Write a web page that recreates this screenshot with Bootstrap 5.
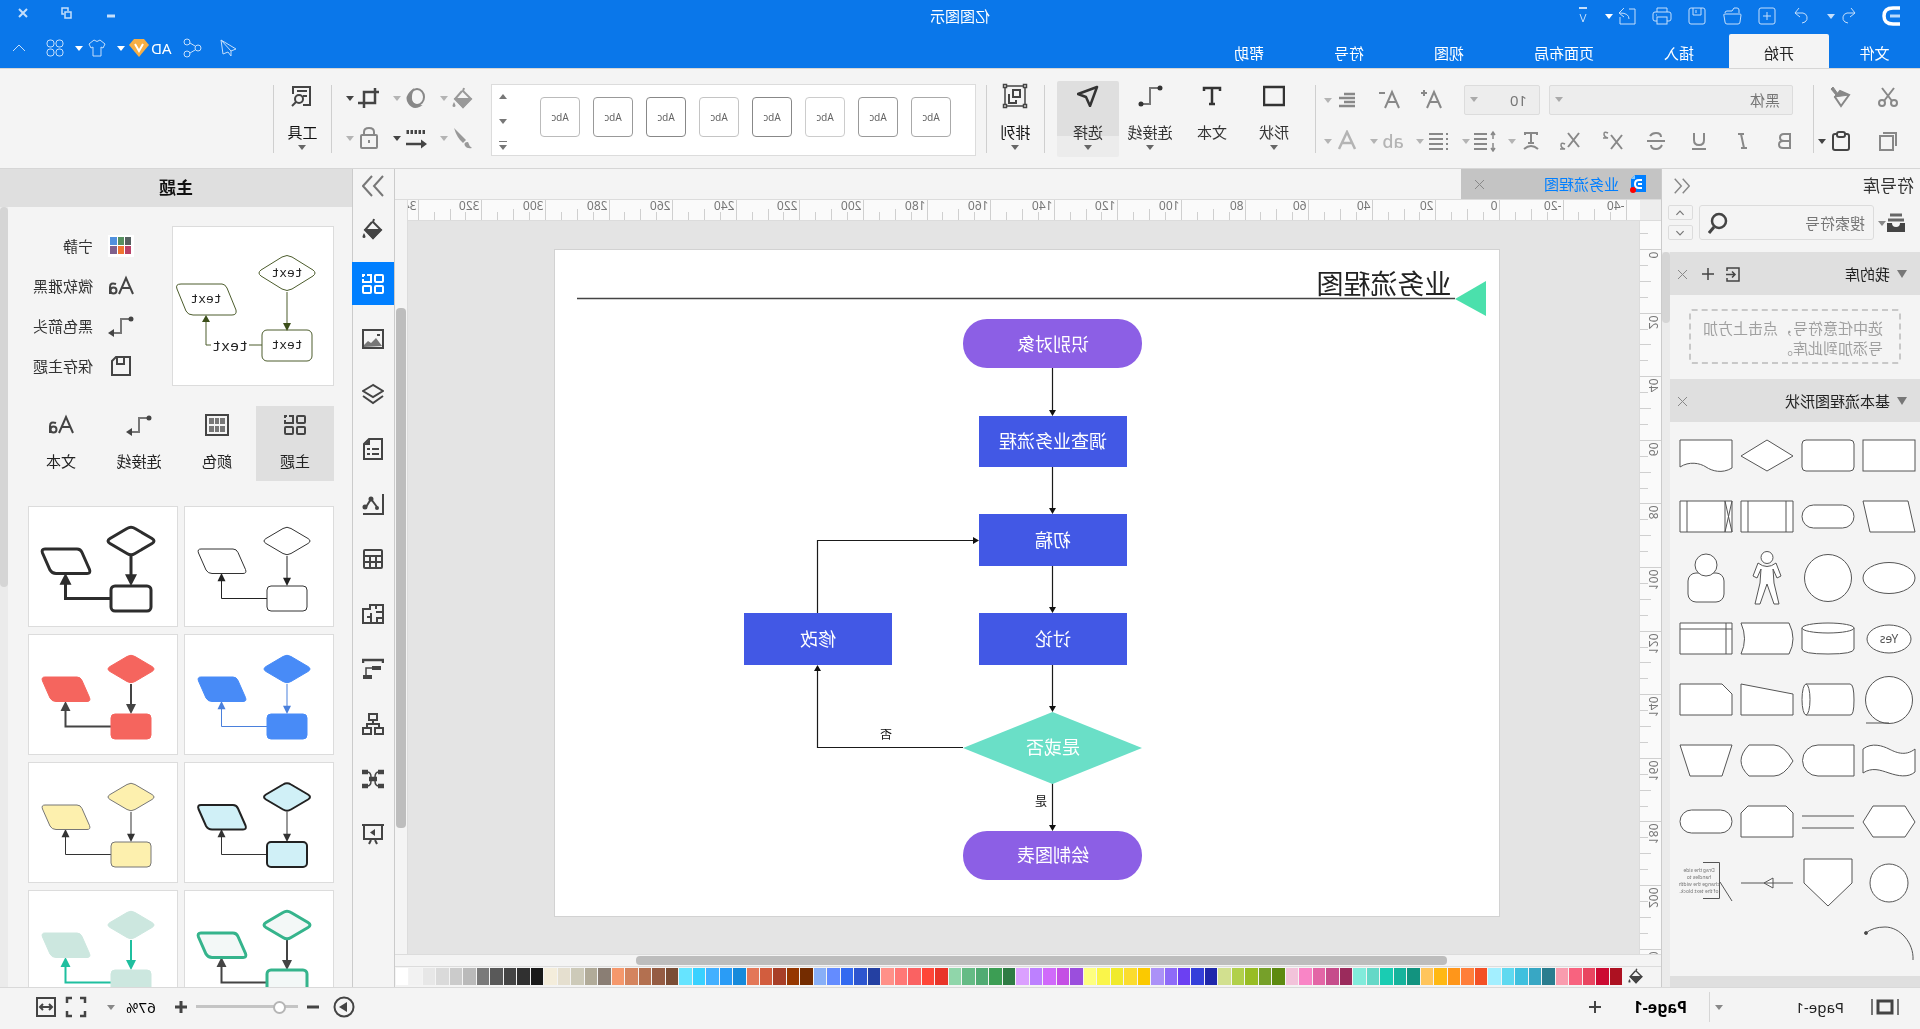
<!DOCTYPE html>
<html lang="zh-CN">
<head>
<meta charset="utf-8">
<meta name="viewport" content="width=device-width, initial-scale=1">
<title>亿图图示</title>
<link href="https://cdn.jsdelivr.net/npm/bootstrap@5.3.0/dist/css/bootstrap.min.css" rel="stylesheet">
<style>
:root{--edge:#d6d6d6;--panel:#f4f4f4;--bar:#dfdfdf;--ink:#444;--accent:#007fff}
body{font-family:"Noto Sans","Noto Sans CJK SC",sans-serif;font-size:15px;line-height:20px;color:#333;background:var(--panel);overflow:hidden}
/* the whole window is shown as in a looking glass */
.mirror{transform:scaleX(-1)}
button{border:0;background:none;padding:0;color:inherit;font-size:15px}
svg{display:block;flex:none}
.ic{width:22px;height:22px;fill:none;stroke:currentColor;stroke-width:2}
.ic-sm{width:20px;height:20px;fill:none;stroke:currentColor;stroke-width:1}
.ic-wide{width:26px}
.ic-frame{width:26px;height:26px}
.ic-mini{width:16px;height:16px;fill:none;stroke:currentColor;stroke-width:2}
.w15{stroke-width:1.5}.w2{stroke-width:2}.w3{stroke-width:3}
.caret{width:8px;height:8px;fill:currentColor;stroke:none}
.solid{fill:currentColor;stroke:none}
.off{color:#888}.dim{color:#b4b4b4}.mid{color:#999}.on{color:var(--ink)}
.fit{min-width:0;min-height:0}
/* title bar */
.topbar{background:#0a77ea;color:#fff;height:68px}
.quick{color:#c5dffb;height:34px}
.side{flex:1 1 0;min-width:0;height:31px}
.logo{width:18px;height:20px;fill:none;stroke:#fff;margin:0 24px 0 20px}
.files{gap:15px;margin:0 4px 0 15px}
.undo{margin-right:3px}.custom{margin-left:12px}
.apptitle{color:#fff;line-height:32px}
.winbtns{gap:24px;margin:3px 13px 0 0}
.topbar .nav-link{color:#fff;padding:8px 0;width:100px;height:34px;text-align:center;line-height:22px;border-radius:0}
.topbar .nav-link.first{width:91px}
.topbar .nav-link.wide{width:130px}
.topbar .nav-link.active{background:var(--panel);color:#222;border-radius:2px 2px 0 0}
.account{color:#c5dffb;padding:0 9px 6px 0}
.account .caret{color:#fff;margin-right:10px}
.account .share{margin-right:10px}
.gem{margin:0 4px 0 2px}
/* ribbon */
.ribbon{height:101px;border-top:1px solid var(--edge);border-bottom:1px solid var(--edge);background:var(--panel);padding-top:12px}
.sep{width:1px;height:68px;background:#cfcfcf;margin-top:4px;flex:none}
.grp{padding-top:4px}
.r1,.r2{display:flex;align-items:center;height:30px}
.r2{margin-top:11px}
.clip{width:106px;padding-left:21px}
.clip .r1,.clip .r2{gap:25px}
.clip .r1{height:24px}.clip .r2{margin-top:17px}
.fontgrp{width:497px;padding-left:20px}
.fontgrp .r2{margin-left:-3px}
.sizers{margin-left:22px;gap:20px}
.marks{gap:21px;margin-right:17px}
.paras{gap:12px}
.fbox{height:30px;border:1px solid #dcdcdc;border-radius:2px;background-color:#ededed;color:#777;font-size:15px;line-height:20px;padding:2px 12px;appearance:none;background-image:url("data:image/svg+xml,%3Csvg xmlns='http://www.w3.org/2000/svg' width='8' height='8'%3E%3Cpath d='M0 2h8L4 7z' fill='%23aaa'/%3E%3C/svg%3E");background-repeat:no-repeat;background-position:right 5px top 9px}
.fbox.wide{width:244px}.fbox.slim{width:76px;margin-left:9px}
.abtxt{width:22px;font-size:18px;line-height:22px;font-weight:500;text-align:center}
.bigs{padding:0 12px 0 10px}
.big{width:62px;height:76px;color:#333;display:flex;flex-direction:column;align-items:center;padding-top:4px}
.big .cap{margin-top:15px;line-height:20px}
.big .caret{color:#666;margin-top:1px}
.big.narrow{width:57px;color:#111}
.big.framed{padding-top:2px}.big.framed .cap{margin-top:13px}
.big.sel{background:linear-gradient(#dfdfdf 55px,#ececec 55px);border-radius:2px}
.gallery{width:485px;height:72px;margin:3px 0 0 10px;background:#fff;border:1px solid #dcdcdc;padding:12px 7px 0 24px}
.stylist{gap:13px}
.pager{gap:16px;margin-top:-4px;color:#777}
.sty{width:40px;height:40px;border:1px solid #aaa;border-radius:4px;font-size:10px;line-height:38px;color:#666;text-align:center;background:#fff}
.paint{padding-left:17px;width:159px}
.paint .r1,.paint .r2{gap:13px}
.paint .r1{height:26px}.paint .r2{margin-top:12px}
/* symbol library */
.lib{width:259px;border-right:1px solid #cbcbcb;background:var(--panel)}
.libhead{height:33px;padding:0 12px 0 6px}
.lib h2{font-size:17px;line-height:24px;margin:0;color:#333;font-weight:400}
.libfind{height:37px;margin:2px 0 11px;padding-left:14px}
.find{width:175px;height:35px;border:1px solid #dcdcdc;border-radius:3px;margin:0 6px 0 4px}
.find input{border:0;background:none;outline:0;font-size:15px;padding:0 0 0 8px;width:140px;color:#666}
.find input::placeholder{color:#777;opacity:1}
.steps{gap:5px}
.step{width:25px;height:15px;border:1px solid #dcdcdc;border-radius:2px;color:#777;display:grid;place-items:center}
.step svg{width:14px;height:12px;fill:none;stroke:currentColor;stroke-width:2}
.sect{height:43px;background:var(--bar);color:#222;padding:0 3px 0 13px;gap:7px}
.fold{width:10px;height:8px;fill:#777}
.acts{gap:5px}
.drop{margin:14px 19px 15px;height:55px;border:2px dashed #c8c8c8;border-radius:3px;padding:7px 0 0 16px;color:#a0a0a0;line-height:20px}
.stencil{display:grid;grid-template-columns:repeat(4,61px);padding-top:3px}
.stencil svg{width:61px;height:61px;fill:#fff;stroke:#555;stroke-width:1}
.nextsect{height:11px;background:var(--bar)}
.track{width:8px;background:#ebebeb}
.thumb{background:#d5d5d5;border-radius:4px}
.track .short{height:71px}.track .long{height:380px}
/* document */
.tabs{height:31px;border-bottom:1px solid #dcdcdc}
.doctab{width:200px;background:#c4c4c4;color:var(--accent);padding:0 9px 0 14px}
.doctab span{margin-left:10px}
.rule{background:#fafafa;color:#777}
.rule text{font-size:12px;fill:#777}
.rule path{stroke:#cfcfcf;fill:none;stroke-width:1}
.hrule{height:21px;border-bottom:1px solid #dcdcdc}
#hrule{min-width:0;overflow:visible;clip-path:inset(-4px 0 0 0)}
#vrule{overflow:visible}
.corner{width:21px;height:20px;background:#ededed;flex:none}
.vrule{width:22px;border-right:1px solid #dcdcdc;overflow-y:clip;overflow-x:visible}
.board{background:#e4e4e4;padding:28px 0 0 139px}
.sheet{width:946px;height:668px;background:#fff;border:1px solid #d2d2d2}
.sheet text{text-anchor:middle}
.vbar{width:13px;background:var(--panel);border-left:1px solid #dcdcdc;padding:108px 1px 0 1px}
.vbar .thumb{background:#bdbdbd;height:520px}
.hbar{height:12px;border-top:1px solid #dcdcdc;padding:1px 0 1px 214px}
.hbar .thumb{background:#bdbdbd;width:811px;height:9px}
.swatches{height:21px;border-top:1px solid #dcdcdc;padding:1px 1px 2px 17px;gap:6px}
.chips{gap:1px}
.chips i{flex:1;min-width:0}
/* side strip and theme panel */
.strip{width:43px;border-left:1px solid #cbcbcb;border-right:1px solid #cbcbcb;color:var(--ink)}
.strip button{height:43px;width:42px;margin-bottom:12px;display:grid;place-items:center}
.strip button.first{height:38px;margin-bottom:0;padding-bottom:4px;color:#777}
.strip button.sel{background:var(--accent);color:#fff}
.theme{width:352px;background:var(--panel)}
.theme h2{height:39px;background:var(--bar);font-size:17px;line-height:38px;font-weight:700;color:#111;margin:0;text-align:center}
.themebody{padding:19px 12px 0 18px}
.prev{width:162px;height:160px;background:#fff;border:1px solid #dcdcdc}
.prev text{font-family:"Liberation Mono",monospace;font-size:13px;text-anchor:middle;fill:#222}
.prev .link{font-size:15px}
.opts{padding-left:38px}
.opt{height:40px;gap:15px}
.ttabs{margin:20px 0 25px}
.ttab{width:78px;height:75px;display:flex;flex-direction:column;align-items:center;padding-top:8px;color:#222}
.ttab .ic{color:var(--ink)}
.ttab span{margin-top:15px}
.ttab.sel{background:var(--bar)}
.cards{display:grid;grid-template-columns:150px 150px;gap:7px 6px}
.cards svg{width:150px;height:121px;background:#fff;border:1px solid #dcdcdc}
/* status bar */
.status{height:42px;border-top:1px solid #d9d9d9;color:#222;background:var(--panel);padding:0 35px 3px 21px}
.film{width:28px;height:20px;fill:none;stroke:currentColor;stroke-width:2}
.pagepick{margin-left:27px;width:129px}
.vline{width:1px;height:30px;background:var(--edge);margin:0 22px 0 5px}
.curpage{font-size:16px;font-weight:700;color:#000;text-decoration:none;margin-right:29px}
.zout{margin:0 5px 0 10px}.zin{margin:0 15px 0 5px}
.pct{color:#000;gap:11px;margin-right:20px}
.full{margin-right:8px}
.zoomer{width:102px;height:16px;appearance:none;background:linear-gradient(#c4c4c4,#c4c4c4) 0 6px/100% 3px no-repeat;margin:0}
.zoomer::-webkit-slider-thumb{appearance:none;width:13px;height:13px;border-radius:50%;background:#fff;border:2px solid #b5b5b5}
</style>
<script src="https://cdn.jsdelivr.net/npm/bootstrap@5.3.0/dist/js/bootstrap.bundle.min.js"></script>
</head>
<body>
<svg width="0" height="0" class="position-absolute" aria-hidden="true">
<defs>
<symbol id="caret" viewBox="0 0 8 8"><path d="M0 2h8L4 7z"/></symbol>
<symbol id="caretup" viewBox="0 0 8 8"><path d="M0 6h8L4 1z"/></symbol>
<symbol id="x" viewBox="0 0 20 20"><path d="M6 6l9 9M15 6l-9 9"/></symbol>
<symbol id="plus" viewBox="0 0 20 20"><path d="M10 4v12M4 10h12"/></symbol>
<symbol id="minus" viewBox="0 0 20 20"><path d="M4 10h12"/></symbol>
<symbol id="up" viewBox="0 0 20 20"><path d="M4 13l6-6 6 6"/></symbol>
<symbol id="down" viewBox="0 0 20 20"><path d="M4 7l6 6 6-6"/></symbol>
<symbol id="chev2" viewBox="0 0 22 22"><path d="M1 1l9 10-9 10M12 1l9 10-9 10"/></symbol>
<symbol id="chev1" viewBox="0 0 22 22"><path d="M10 1L1 11l9 10M21 1l-9 10 9 10"/></symbol>
<symbol id="undo" viewBox="0 0 20 20"><path d="M7 2L3 7l5 4M3 7h8a5 5 0 0 1 2 9l-3 1"/></symbol>
<symbol id="redo" viewBox="0 0 20 20"><path d="M13 2l4 5-5 4M17 7H9a5 5 0 0 0-2 9l3 1"/></symbol>
<symbol id="new" viewBox="0 0 20 20"><rect x="2" y="2" width="16" height="16" rx="2"/><path d="M10 6v8M6 10h8"/></symbol>
<symbol id="folder" viewBox="0 0 20 20"><path d="M3 7V4q0-2 2-2h3l2 3h5q2 0 2 2"/><path d="M1 9q0-1 1-1h15q2 0 1 2l-1 6q0 2-2 2H4q-2 0-2-2z"/></symbol>
<symbol id="save" viewBox="0 0 20 20"><rect x="2" y="2" width="16" height="16" rx="2"/><path d="M6 2v7h8V2M11 4v3"/></symbol>
<symbol id="print" viewBox="0 0 20 20"><path d="M5 6V2h10v4M5 15H3q-2 0-2-2V8q0-2 2-2h14q2 0 2 2v5q0 2-2 2h-2"/><rect x="5" y="11" width="10" height="7"/><path d="M15 9h1"/></symbol>
<symbol id="export" viewBox="0 0 20 20"><path d="M8 3H2v15h15v-7M8 13q0-6 9-6M13 2l5 5-5 4"/></symbol>
<symbol id="custom" viewBox="0 0 20 20"><path d="M6 2h8" stroke-width="2"/><path d="M7 8l3 8 3-8"/></symbol>
<symbol id="send" viewBox="0 0 20 20"><path d="M17 2L2 11l5 2v5l3-4 5 2zM17 2L7 13"/></symbol>
<symbol id="share" viewBox="0 0 20 20"><circle cx="4" cy="10" r="3"/><circle cx="15" cy="4" r="3"/><circle cx="15" cy="16" r="3"/><path d="M7 8l5-3M7 12l5 3"/></symbol>
<symbol id="shirt" viewBox="0 0 20 20"><path d="M7 2q3 3 6 0l5 4-2 4-2-1v9H6V9l-2 1-2-4z"/></symbol>
<symbol id="clover" viewBox="0 0 20 20"><rect x="2" y="2" width="7" height="7" rx="3"/><rect x="11" y="2" width="7" height="7" rx="3"/><rect x="2" y="11" width="7" height="7" rx="3"/><rect x="11" y="11" width="7" height="7" rx="3"/></symbol>
<symbol id="minimize" viewBox="0 0 20 20"><path d="M6 13h8"/></symbol>
<symbol id="restore" viewBox="0 0 20 20"><path d="M9 8V5h6v6h-2M9 5h6M6 9h6v6H6zM6 9h6" stroke-width="1.500"/></symbol>
<symbol id="close" viewBox="0 0 20 20"><path d="M6 6l8 8M14 6l-8 8"/></symbol>
<symbol id="cut" viewBox="0 0 22 22"><circle cx="5" cy="17" r="3"/><circle cx="17" cy="17" r="3"/><path d="M7 15L17 2M15 15L5 2"/></symbol>
<symbol id="copy" viewBox="0 0 22 22"><rect x="6" y="6" width="13" height="14"/><path d="M3 16V3h13"/></symbol>
<symbol id="painter" viewBox="0 0 22 22"><path d="M3 9l9-4 5 6-6 9z"/><path d="M3 9l9-4 2 3 5-7 2 2-5 6 2 2z" fill="currentColor" stroke-width="1"/></symbol>
<symbol id="paste" viewBox="0 0 22 22"><rect x="3" y="4" width="16" height="16" rx="2"/><rect x="7" y="2" width="8" height="5" rx="2" fill="#f4f4f4"/></symbol>
<symbol id="abig" viewBox="0 0 22 22"><path d="M1 19L8 3l7 16M4 13h8M15 4h6M18 1v6"/></symbol>
<symbol id="asmall" viewBox="0 0 22 22"><path d="M1 19L8 3l7 16M4 13h8M15 4h6"/></symbol>
<symbol id="align" viewBox="0 0 22 22"><path d="M3 5h11M3 9h16M3 13h11M3 17h16" stroke-width="2.500"/></symbol>
<symbol id="bold" viewBox="0 0 22 22"><path d="M6 4h6q4 0 4 3.500t-4 3.500H6zM6 11h7q4 0 4 3.500t-4 3.500H6z"/></symbol>
<symbol id="ital" viewBox="0 0 22 22"><path d="M9 4h6M6 18h6M12 4L9 18"/></symbol>
<symbol id="under" viewBox="0 0 22 22"><path d="M6 3v7q0 5 5 5t5-5V3M4 19h14"/></symbol>
<symbol id="strike" viewBox="0 0 22 22"><path d="M17 6q-2-3-6-3-5 0-5 4M5 15q2 4 6 4 5 0 5-4M2 11h18"/></symbol>
<symbol id="xsup" viewBox="0 0 22 22"><path d="M2 5l11 14M13 5L2 19"/><path d="M16 3q4-2 4 1t-4 4h5" stroke-width="1.500"/></symbol>
<symbol id="xsub" viewBox="0 0 22 22"><path d="M2 3l11 14M13 3L2 17"/><path d="M16 14q4-2 4 1t-4 4h5" stroke-width="1.500"/></symbol>
<symbol id="tcurve" viewBox="0 0 22 22"><path d="M5 5V3h12v2M11 3v11M8 13h6M4 19q7-6 14 0"/></symbol>
<symbol id="lsp" viewBox="0 0 22 22"><path d="M9 4h13M9 9h13M9 14h13M9 19h13"/><path d="M3 2v7M3 13v8M1 5l2-3 2 3M1 18l2 3 2-3" stroke-width="1.500"/></symbol>
<symbol id="list" viewBox="0 0 22 22"><path d="M7 4h14M7 9h14M7 14h14M7 19h14M2 4h2M2 9h2M2 14h2M2 19h2"/></symbol>
<symbol id="acol" viewBox="0 0 22 22"><path d="M3 19l8-17 8 17M6 13h10" stroke-width="2.500"/></symbol>
<symbol id="sq" viewBox="0 0 22 22"><rect x="1" y="2" width="20" height="18" stroke-width="2.500"/></symbol>
<symbol id="tt" viewBox="0 0 22 22"><path d="M3 6V3h16v3M11 3v16M8 19h6" stroke-width="2.500"/></symbol>
<symbol id="conn" viewBox="0 0 26 22"><path d="M3 3h10v16h8" stroke="#777"/><circle cx="3" cy="3" r="2.500" class="solid"/><circle cx="22" cy="19" r="2.500" class="solid"/></symbol>
<symbol id="conn2" viewBox="0 0 26 22"><path d="M3 4h10v14h7" stroke="#777"/><circle cx="3" cy="4" r="2.500" class="solid"/><path d="M20 14l6 4-6 4z" class="solid"/></symbol>
<symbol id="pick" viewBox="0 0 22 22"><path d="M2 2l19 7-8 3-4 9z" stroke-linejoin="round" stroke-width="2.500"/></symbol>
<symbol id="arr" viewBox="0 0 26 26"><path d="M3 3h20v20H3z" stroke-width="1.500"/><path d="M1.500 1.500h3v3h-3zM21.500 1.500h3v3h-3zM1.500 21.500h3v3h-3zM21.500 21.500h3v3h-3z" fill="#f4f4f4" stroke-width="1.500"/><rect x="8" y="7" width="7" height="7"/><path d="M18 12h1v8h-7v-3"/></symbol>
<symbol id="fill" viewBox="0 0 22 22"><path d="M10 1l1 3-8 8 8 8 8-8-7-8"/><path d="M4 12h14l-7 8z" fill="currentColor"/><path d="M20 15q3 5 0 5t0-5z" class="solid"/></symbol>
<symbol id="shadow" viewBox="0 0 22 22"><ellipse cx="10" cy="10" rx="7" ry="8"/><path d="M15 4q7 6 3 12-4 6-10 3 11-1 7-15z" fill="currentColor"/></symbol>
<symbol id="crop" viewBox="0 0 22 22"><path d="M1 5h15v16M5 1v15h17" stroke-width="2.500"/></symbol>
<symbol id="brush" viewBox="0 0 22 22"><path d="M20 1L8 13l3 3q6-5 9-15z" class="solid"/><path d="M6 15q5 0 3 4-2 3-7 2 3-2 4-6z" class="solid"/></symbol>
<symbol id="dash" viewBox="0 0 22 22"><path d="M2 5h19" stroke-width="4" stroke-dasharray="2.500 1.500"/><path d="M5 17h16" stroke-width="2.500"/><path d="M6 12.500L0 17l6 4.500z" class="solid"/></symbol>
<symbol id="lock" viewBox="0 0 22 22"><rect x="3" y="8" width="16" height="13" rx="1"/><path d="M6 8V5q0-4 5-4t5 4v3M11 13v3"/></symbol>
<symbol id="tools" viewBox="0 0 22 22"><path d="M20 9V2H3v18h7M6 6h10M6 11h4"/><circle cx="14" cy="14" r="4"/><path d="M17 17l4 4"/></symbol>
<symbol id="glass" viewBox="0 0 22 22"><circle cx="11" cy="9" r="7" stroke-width="2.500"/><path d="M16 15l5 6" stroke-width="3"/></symbol>
<symbol id="drawer" viewBox="0 0 20 20"><path d="M4 2h12M2 7h16" stroke="#666" stroke-width="3"/><path d="M1 10h5q0 4 4 4t4-4h5v9H1z" class="solid"/></symbol>
<symbol id="import" viewBox="0 0 20 20"><path d="M16 7V4H4v13h12v-3M17 10.500H8M11 7.500l-3 3 3 3" stroke-width="1.500"/></symbol>
<symbol id="grid4" viewBox="0 0 22 22"><rect x="1" y="2" width="8" height="7" rx="1"/><rect x="1" y="13" width="8" height="7" rx="1"/><rect x="13" y="13" width="8" height="7" rx="1"/><path d="M17 2h-4v7h8V6M19 2h2v2"/></symbol>
<symbol id="image" viewBox="0 0 22 22"><rect x="1" y="2" width="20" height="18"/><path d="M2 18l6-8 5 5 3-2 4 4v2z" fill="#777" stroke="none"/><path d="M4 7h3"/></symbol>
<symbol id="layers" viewBox="0 0 22 22"><path d="M11 2l10 6-10 6L1 8zM1 13l10 7 10-7"/></symbol>
<symbol id="doc" viewBox="0 0 22 22"><path d="M2 1h13l5 5v15H2z"/><path d="M5 11h7M5 16h7M14 11h3M14 16h3"/><path d="M14 1l6 6h-6z" class="solid"/></symbol>
<symbol id="chart" viewBox="0 0 22 22"><path d="M1 1v20h20M7 14l6-8 5 8"/><circle cx="7" cy="15" r="2" class="solid"/><circle cx="13" cy="6" r="2.500" class="solid"/><circle cx="19" cy="14" r="2.500" class="solid"/></symbol>
<symbol id="table" viewBox="0 0 22 22"><rect x="2" y="2" width="18" height="18" rx="1"/><path d="M2 8h18M2 14h18M8 8v12M14 8v12"/></symbol>
<symbol id="floor" viewBox="0 0 22 22"><path d="M1 2h13v4h7v14H1zM1 9h7M8 2v4M1 15h6v5M13 10v10M13 14h4"/></symbol>
<symbol id="gantt" viewBox="0 0 22 22"><path d="M1 5V2h20v3" stroke-width="2.500"/><path d="M3 10h9M12 19h9" stroke-width="4"/><path d="M12 10h6v8" stroke-width="1.500"/></symbol>
<symbol id="org" viewBox="0 0 22 22"><rect x="7" y="1" width="8" height="6"/><rect x="1" y="15" width="8" height="6"/><rect x="13" y="15" width="8" height="6"/><path d="M11 7v4M5 15v-4h12v4"/></symbol>
<symbol id="mind" viewBox="0 0 22 22"><path d="M0 4h6M16 4h6M0 18h6M16 18h6M7 11h8" stroke-width="4.500"/><path d="M5 4q4 0 4 5M5 18q4 0 4-5M17 4q-4 0-4 5M17 18q-4 0-4-5" stroke-width="1.500"/></symbol>
<symbol id="present" viewBox="0 0 22 22"><path d="M0 2h22M2 2v14h18V2M7 21l2-4M15 21l-2-4"/><path d="M9 6l5 3.500-5 3.500z" class="solid"/></symbol>
<symbol id="aa" viewBox="0 0 26 22"><path d="M1 19L8 3l7 16M4 13h8"/><path d="M18 9q6-2 6 3v7"/><circle cx="20.500" cy="15.500" r="3"/></symbol>
<symbol id="colors" viewBox="0 0 26 22"><rect x="2" y="1" width="22" height="20"/><path d="M5 4h5v6H5zM11 4h4v6h-4zM16 4h5v6h-5zM5 12h5v6H5zM11 12h4v6h-4zM16 12h5v6h-5z" fill="#777" stroke="none"/></symbol>
<symbol id="disk" viewBox="0 0 22 22"><path d="M2 2h14l4 4v14H2zM8 2v7h7V2"/></symbol>
<symbol id="film" viewBox="0 0 28 20"><rect x="7" y="4" width="14" height="12" stroke-width="3"/><path d="M1 2v16M27 2v16" stroke="#777"/></symbol>
<symbol id="play" viewBox="0 0 22 22"><circle cx="11" cy="11" r="9.500"/><path d="M8 6l8 5-8 5z" class="solid"/></symbol>
<symbol id="full" viewBox="0 0 22 22"><path d="M2 7V2h5M15 2h5v5M20 15v5h-5M7 20H2v-5" stroke-width="2.500"/></symbol>
<symbol id="fit" viewBox="0 0 22 22"><rect x="2" y="2" width="18" height="18"/><path d="M5 11h12M8 8l-3 3 3 3M14 8l3 3-3 3"/></symbol>
<symbol id="logo" viewBox="0 0 18 20"><path d="M0 2h7q9 0 9 8t-9 8H0" stroke-width="3.500"/><path d="M0 10h10" stroke="#b9d9fb" stroke-width="3"/></symbol>
</defs>
</svg>

<div class="mirror vh-100 d-flex flex-column overflow-hidden">
<header class="topbar flex-shrink-0">
  <div class="quick d-flex">
    <div class="side d-flex align-items-center">
      <svg class="logo"><use href="#logo"/></svg>
      <button aria-label="撤销" class="undo"><svg class="ic-sm"><use href="#undo"/></svg></button>
      <svg class="caret"><use href="#caret"/></svg>
      <div class="files d-flex">
      <button aria-label="恢复"><svg class="ic-sm"><use href="#redo"/></svg></button>
      <button aria-label="新建"><svg class="ic-sm"><use href="#new"/></svg></button>
      <button aria-label="打开"><svg class="ic-sm"><use href="#folder"/></svg></button>
      <button aria-label="保存"><svg class="ic-sm"><use href="#save"/></svg></button>
      <button aria-label="打印"><svg class="ic-sm"><use href="#print"/></svg></button>
      <button aria-label="导出"><svg class="ic-sm"><use href="#export"/></svg></button>
      </div>
      <svg class="caret text-white"><use href="#caret"/></svg>
      <button aria-label="自定义" class="custom"><svg class="ic-sm"><use href="#custom"/></svg></button>
    </div>
    <div class="apptitle">亿图图示</div>
    <div class="side">
      <div class="winbtns d-flex justify-content-end">
      <button aria-label="最小化"><svg class="ic-sm w3"><use href="#minimize"/></svg></button>
      <button aria-label="还原"><svg class="ic-sm"><use href="#restore"/></svg></button>
      <button aria-label="关闭"><svg class="ic-sm w2"><use href="#close"/></svg></button>
      </div>
    </div>
  </div>
  <div class="d-flex">
    <nav class="nav flex-nowrap">
      <a class="nav-link first" href="#">文件</a><a class="nav-link active" href="#">开始</a><a class="nav-link" href="#">插入</a><a class="nav-link wide" href="#">页面布局</a><a class="nav-link" href="#">视图</a><a class="nav-link" href="#">符号</a><a class="nav-link" href="#">帮助</a>
    </nav>
    <div class="account ms-auto d-flex align-items-center">
      <svg class="ic-sm me-3"><use href="#send"/></svg>
      <svg class="ic-sm share"><use href="#share"/></svg>
      <span class="text-white">AD</span>
      <svg width="20" height="20" class="gem"><path d="M5 1h10l5 6-10 12L0 7z" fill="#f6ae45"/><path d="M6 6l4 7 4-7" fill="none" stroke="#fff" stroke-width="2"/></svg>
      <svg class="caret"><use href="#caret"/></svg>
      <svg class="ic-sm me-1"><use href="#shirt"/></svg>
      <svg class="caret"><use href="#caret"/></svg>
      <svg class="ic-sm me-3"><use href="#clover"/></svg>
      <svg class="ic-sm"><use href="#up"/></svg>
    </div>
  </div>
</header>

<section class="ribbon d-flex flex-shrink-0" aria-label="开始">
  <div class="grp clip off">
    <div class="r1"><button aria-label="剪切"><svg class="ic"><use href="#cut"/></svg></button><button aria-label="格式刷"><svg class="ic"><use href="#painter"/></svg></button></div>
    <div class="r2"><button aria-label="复制"><svg class="ic"><use href="#copy"/></svg></button><button aria-label="粘贴" class="d-flex align-items-center gap-1 on"><svg class="ic"><use href="#paste"/></svg><svg class="caret"><use href="#caret"/></svg></button></div>
  </div>
  <div class="sep"></div>
  <div class="grp fontgrp off">
    <div class="r1">
      <select class="fbox wide" aria-label="字体"><option>黑体</option></select>
      <select class="fbox slim" aria-label="字号"><option>10</option></select>
      <div class="sizers d-flex align-items-center">
      <button aria-label="增大字号"><svg class="ic"><use href="#abig"/></svg></button><button aria-label="减小字号"><svg class="ic"><use href="#asmall"/></svg></button>
      <button aria-label="对齐" class="d-flex align-items-center gap-1"><svg class="ic"><use href="#align"/></svg><svg class="caret dim"><use href="#caret"/></svg></button></div>
    </div>
    <div class="r2">
      <div class="marks d-flex">
      <button aria-label="加粗"><svg class="ic"><use href="#bold"/></svg></button><button aria-label="斜体"><svg class="ic"><use href="#ital"/></svg></button><button aria-label="下划线"><svg class="ic"><use href="#under"/></svg></button><button aria-label="删除线"><svg class="ic"><use href="#strike"/></svg></button><button aria-label="上标"><svg class="ic"><use href="#xsup"/></svg></button><button aria-label="下标"><svg class="ic"><use href="#xsub"/></svg></button></div>
      <div class="paras d-flex">
      <button aria-label="文字方向" class="d-flex align-items-center gap-1"><svg class="ic"><use href="#tcurve"/></svg><svg class="caret dim"><use href="#caret"/></svg></button>
      <button aria-label="行距" class="d-flex align-items-center gap-1"><svg class="ic"><use href="#lsp"/></svg><svg class="caret dim"><use href="#caret"/></svg></button>
      <button aria-label="项目符号" class="d-flex align-items-center gap-1"><svg class="ic"><use href="#list"/></svg><svg class="caret dim"><use href="#caret"/></svg></button>
      <button aria-label="突出显示" class="d-flex align-items-center gap-1 dim"><span class="abtxt">ab</span><svg class="caret"><use href="#caret"/></svg></button>
      <button aria-label="字体颜色" class="d-flex align-items-center gap-1 dim"><svg class="ic"><use href="#acol"/></svg><svg class="caret"><use href="#caret"/></svg></button></div>
    </div>
  </div>
  <div class="sep"></div>
  <div class="bigs d-flex">
    <button class="big"><svg class="ic"><use href="#sq"/></svg><span class="cap">形状</span><svg class="caret"><use href="#caret"/></svg></button>
    <button class="big"><svg class="ic"><use href="#tt"/></svg><span class="cap">文本</span></button>
    <button class="big"><svg class="ic ic-wide"><use href="#conn"/></svg><span class="cap">连接线</span><svg class="caret"><use href="#caret"/></svg></button>
    <button class="big sel"><svg class="ic"><use href="#pick"/></svg><span class="cap">选择</span><svg class="caret"><use href="#caret"/></svg></button>
  </div>
  <div class="sep"></div>
  <button class="big narrow framed"><svg class="ic ic-frame on"><use href="#arr"/></svg><span class="cap">排列</span><svg class="caret"><use href="#caret"/></svg></button>
  <div class="sep"></div>
  <div class="gallery d-flex flex-shrink-0">
    <div class="stylist d-flex" id="styles"></div>
    <div class="pager d-flex flex-column ms-auto"><svg class="caret"><use href="#caretup"/></svg><svg class="caret"><use href="#caret"/></svg><svg width="8" height="10" fill="#777"><path d="M0 0h8v1H0zM0 4h8L4 9z"/></svg></div>
  </div>
  <div class="grp paint">
    <div class="r1">
      <button aria-label="填充" class="d-flex align-items-center gap-1 dim"><svg class="ic mid"><use href="#fill"/></svg><svg class="caret"><use href="#caret"/></svg></button>
      <button aria-label="阴影" class="d-flex align-items-center gap-1 dim"><svg class="ic off"><use href="#shadow"/></svg><svg class="caret"><use href="#caret"/></svg></button>
      <button aria-label="裁剪" class="d-flex align-items-center gap-1 on"><svg class="ic"><use href="#crop"/></svg><svg class="caret"><use href="#caret"/></svg></button>
    </div>
    <div class="r2">
      <button aria-label="线条颜色" class="d-flex align-items-center gap-1 dim"><svg class="ic mid"><use href="#brush"/></svg><svg class="caret"><use href="#caret"/></svg></button>
      <button aria-label="线型" class="d-flex align-items-center gap-1 on"><svg class="ic"><use href="#dash"/></svg><svg class="caret"><use href="#caret"/></svg></button>
      <button aria-label="锁定" class="d-flex align-items-center gap-1 dim"><svg class="ic off"><use href="#lock"/></svg><svg class="caret"><use href="#caret"/></svg></button>
    </div>
  </div>
  <div class="sep"></div>
  <button class="big narrow"><svg class="ic on"><use href="#tools"/></svg><span class="cap">工具</span><svg class="caret"><use href="#caret"/></svg></button>
  <div class="sep"></div>
</section>

<main class="d-flex flex-grow-1 fit">
  <aside class="lib d-flex flex-column flex-shrink-0 overflow-hidden">
    <div class="libhead d-flex align-items-center"><h2>符号库</h2><button class="ms-auto off" aria-label="收起"><svg class="ic-mini"><use href="#chev1"/></svg></button></div>
    <div class="libfind d-flex align-items-center flex-shrink-0">
      <button class="d-flex align-items-center on" aria-label="符号库列表"><svg class="ic-sm"><use href="#drawer"/></svg><svg class="caret off"><use href="#caret"/></svg></button>
      <div class="find d-flex align-items-center justify-content-between pe-2"><input type="text" placeholder="搜索符号" aria-label="搜索符号"><svg class="ic on"><use href="#glass"/></svg></div>
      <div class="steps d-flex flex-column"><button class="step" aria-label="上一个"><svg viewBox="0 0 20 20"><use href="#up"/></svg></button><button class="step" aria-label="下一个"><svg viewBox="0 0 20 20"><use href="#down"/></svg></button></div>
    </div>
    <div class="d-flex flex-grow-1 fit">
      <div class="flex-grow-1 overflow-hidden d-flex flex-column">
        <div class="sect d-flex align-items-center flex-shrink-0"><svg class="fold"><path d="M0 0h10L5 8z"/></svg><span>我的库</span><span class="acts ms-auto d-flex off"><svg class="ic-sm on"><use href="#import"/></svg><svg class="ic-sm on w15"><use href="#plus"/></svg><svg class="ic-sm"><use href="#x"/></svg></span></div>
        <div class="drop flex-shrink-0">选中任意符号，点击上方加<br>号添加到此库。</div>
        <div class="sect d-flex align-items-center flex-shrink-0"><svg class="fold"><path d="M0 0h10L5 8z"/></svg><span>基本流程图形状</span><span class="ms-auto off"><svg class="ic-sm"><use href="#x"/></svg></span></div>
        <div class="stencil flex-grow-1 overflow-hidden align-content-start">
<svg><rect x="5" y="15" width="52" height="31"/></svg>
<svg><rect x="5" y="15" width="52" height="31" rx="4"/></svg>
<svg><path d="M31 15L57 31 31 46 5 31z"/></svg>
<svg><path d="M5 15V43C15 49 25 46 31 42S48 36 57 42V15z"/></svg>
<svg><path d="M12 15H57L50 46H5z"/></svg>
<svg><rect x="5" y="19" width="52" height="23" rx="11.500"/></svg>
<svg><path d="M5 15H57V46H5zM12 15V46M50 15V46"/></svg>
<svg><path d="M5 15H57V46H5zM12 15V46L5 15M12 15L5 46M50 15V46"/></svg>
<svg><ellipse cx="31" cy="31" rx="26" ry="15.500"/></svg>
<svg><circle cx="31" cy="31" r="23.500"/></svg>
<svg><circle cx="31" cy="10.500" r="6"/><path d="M22 16Q31 23 40 16L45 29 41 31 37 22 38 36 43 57H38L31 37 24 57H19L24 36 25 22 21 31 17 29z"/></svg>
<svg><rect x="13" y="26" width="36" height="29" rx="8"/><circle cx="31" cy="18" r="11"/></svg>
<svg><ellipse cx="31" cy="31" rx="22" ry="14"/><text x="31" y="35" font-size="12" text-anchor="middle" fill="#555" stroke="none">Yes</text></svg>
<svg><path d="M5 20V41Q5 46 31 46T57 41V20"/><ellipse cx="31" cy="20" rx="26" ry="5"/></svg>
<svg><path d="M9 15H57Q50 31 57 46H9Q1 31 9 15z"/></svg>
<svg><path d="M5 15H57V46H5zM11 15V46M5 21H57"/></svg>
<svg><circle cx="31" cy="31" r="23.500"/><path d="M31 54H54"/></svg>
<svg><path d="M53 15H9Q5 15 5 31T9 46H53"/><ellipse cx="53" cy="30.500" rx="4" ry="15.500"/></svg>
<svg><path d="M5 25L57 15V46H5z"/></svg>
<svg><path d="M15 15H57V46H5V25z"/></svg>
<svg><path d="M5 19C15 27 25 22 31 19S48 12 57 19V43C48 37 40 40 31 43S12 48 5 42z"/></svg>
<svg><path d="M5 15H41A15.500 15.500 0 0 1 41 46H5z"/></svg>
<svg><path d="M5 31Q14 15 24 15H49Q65 31 49 46H24Q14 46 5 31z"/></svg>
<svg><path d="M5 15H57L47 46H15z"/></svg>
<svg><path d="M15 15H47L57 31 47 46H15L5 31z"/></svg>
<svg><path d="M5 25H57M5 37H57"/></svg>
<svg><path d="M12 15H50L57 22V46H5V22z"/></svg>
<svg><rect x="5" y="19" width="52" height="23" rx="11.500"/></svg>
<svg><circle cx="31" cy="31" r="19"/></svg>
<svg><path d="M7 7H55V31L31 54 7 31z"/></svg>
<svg><path d="M5 31H57M25 26L34 31 25 36z"/></svg>
<svg><path d="M5 49L17 30M34 10.500H17.500V46.500H34" fill="none"/><g font-size="5" text-anchor="middle" fill="#777" stroke="none"><text x="38" y="20">Drag the side</text><text x="38" y="27">handles to</text><text x="38" y="34">change the width</text><text x="38" y="41">of the text block.</text></g></svg>
<svg><path d="M7 47C6 30 20 14 35 14Q47 14 54 20" fill="none"/><circle cx="54" cy="20" r="1.500" fill="#444"/></svg>
        </div>
        <div class="nextsect flex-shrink-0"></div>
      </div>
      <div class="track"><div class="thumb short"></div></div>
    </div>
  </aside>

  <section class="flex-grow-1 d-flex flex-column fit">
    <div class="tabs d-flex flex-shrink-0">
      <div class="doctab d-flex align-items-center">
        <svg width="18" height="20"><path d="M1 1h11l4 4v13H1z" fill="#007fff"/><path d="M12 1v4h4z" fill="#8cf"/><path d="M5 6h3q4 0 4 4t-4 4H5M5 10h4" fill="none" stroke="#fff" stroke-width="2"/><circle cx="14" cy="16" r="3" fill="red"/></svg>
        <span>业务流程图</span><button class="ms-auto off" aria-label="关闭文档"><svg class="ic-sm"><use href="#x"/></svg></button>
      </div>
    </div>
    <div class="d-flex flex-grow-1 fit">
      <div class="flex-grow-1 d-flex flex-column fit">
        <div class="rule hrule d-flex flex-shrink-0"><div class="corner"></div><svg id="hrule" class="flex-grow-1 flex-shrink-1" height="20"></svg></div>
        <div class="d-flex flex-grow-1 fit">
          <div class="rule vrule flex-shrink-0"><svg id="vrule" width="21" height="730"></svg></div>
          <div class="board flex-grow-1 overflow-hidden fit">
            <svg class="sheet" viewBox="0 0 944 666">
              <path d="M13 31V66L44 49z" fill="#4be0ac"/>
              <path d="M44 48.500H922" stroke="#444" stroke-width="1.500"/>
              <text x="115" y="44" font-size="27" fill="#222">业务流程图</text>
              <g fill="none" stroke="#1a1a1a" stroke-width="1.200">
                <path d="M446.500 118V162M446.500 217V260M446.500 316V359M446.500 415V458M446.500 533V577M536 497.500H681.500V421M681.500 363V290.500H525"/>
              </g>
              <path d="M443 160h7l-3.500 6zM443 258h7l-3.500 6zM443 357h7l-3.500 6zM443 456h7l-3.500 6zM443 575h7l-3.500 6zM678 421h7l-3.500-6zM526 287v7l-6-3.500z" fill="#111"/>
              <g fill="#8c5fe5"><rect x="357" y="69" width="179" height="49" rx="24"/><rect x="357" y="581" width="179" height="49" rx="24"/></g>
              <g fill="#4258e5"><rect x="372" y="166" width="148" height="51"/><rect x="372" y="264" width="148" height="52"/><rect x="372" y="363" width="148" height="52"/><rect x="607" y="363" width="148" height="52"/></g>
              <path d="M357 498L446.500 462 536 498 446.500 534z" fill="#6adfc7"/>
              <g font-size="18" fill="#fff"><text x="446" y="101">识别对象</text><text x="446" y="198">调查业务流程</text><text x="446" y="297">初稿</text><text x="446" y="396">讨论</text><text x="681" y="396">修改</text><text x="446" y="504">是或否</text><text x="446" y="612">绘制图表</text></g>
              <g font-size="12" fill="#111"><text x="613" y="489">否</text><text x="458" y="556">是</text></g>
            </svg>
          </div>
        </div>
      </div>
      <div class="vbar flex-shrink-0"><div class="thumb"></div></div>
    </div>
    <div class="hbar flex-shrink-0"><div class="thumb"></div></div>
    <div class="swatches d-flex flex-shrink-0"><svg class="ic-mini on"><use href="#fill"/></svg><div class="chips d-flex flex-grow-1" id="swatches"></div></div>
  </section>

  <nav class="strip flex-shrink-0" aria-label="面板">
    <button class="first" aria-label="收起"><svg class="ic"><use href="#chev2"/></svg></button>
    <button aria-label="填充"><svg class="ic"><use href="#fill"/></svg></button>
    <button class="sel" aria-label="主题"><svg class="ic"><use href="#grid4"/></svg></button>
    <button aria-label="图片"><svg class="ic"><use href="#image"/></svg></button>
    <button aria-label="图层"><svg class="ic"><use href="#layers"/></svg></button>
    <button aria-label="备注"><svg class="ic"><use href="#doc"/></svg></button>
    <button aria-label="图表"><svg class="ic"><use href="#chart"/></svg></button>
    <button aria-label="表格"><svg class="ic"><use href="#table"/></svg></button>
    <button aria-label="平面图"><svg class="ic"><use href="#floor"/></svg></button>
    <button aria-label="甘特图"><svg class="ic"><use href="#gantt"/></svg></button>
    <button aria-label="组织结构"><svg class="ic"><use href="#org"/></svg></button>
    <button aria-label="思维导图"><svg class="ic"><use href="#mind"/></svg></button>
    <button aria-label="演示"><svg class="ic"><use href="#present"/></svg></button>
  </nav>

  <aside class="theme flex-shrink-0 d-flex flex-column">
    <h2>主题</h2>
    <div class="d-flex flex-grow-1 fit">
      <div class="themebody flex-grow-1 overflow-hidden">
        <div class="d-flex">
          <svg class="prev" viewBox="0 0 160 158">
            <g fill="#fff" stroke="#4c5c2c" stroke-width="1"><path d="M41 30Q46 27 51 30L72 43Q76 46 72 49L51 62Q46 65 41 62L20 49Q16 46 20 43z"/><rect x="21" y="103" width="50" height="31" rx="5"/><path d="M111 57H152Q158 57 156 62L147 84Q145 88 140 88H101Q96 88 97 83L106 61Q108 57 111 57z"/><path d="M46 65V98M71 118H127V92" fill="none"/></g>
            <path d="M42 96h8l-4 8zM123 95h8l-4-7z" fill="#3c4f1a"/>
            <rect x="84" y="110" width="38" height="16" fill="#fff"/>
            <text x="46" y="50">text</text><text x="46" y="122">text</text><text x="127" y="76">text</text><text x="103" y="124" class="link">text</text>
          </svg>
          <div class="opts">
            <div class="opt d-flex align-items-center"><svg width="26" height="22"><rect width="26" height="22" fill="#fff"/><path d="M3 2h6v8H3z" fill="#556060"/><path d="M10 2h6v8h-6z" fill="#55905f"/><path d="M17 2h7v8h-7z" fill="#5090dd"/><path d="M3 11h6v8H3z" fill="#b84068"/><path d="M10 11h6v8h-6z" fill="#f07430"/><path d="M17 11h7v8h-7z" fill="#80608c"/></svg>宁静</div>
            <div class="opt d-flex align-items-center"><svg class="ic ic-wide on"><use href="#aa"/></svg>微软雅黑</div>
            <div class="opt d-flex align-items-center"><svg class="ic ic-wide on"><use href="#conn2"/></svg>黑色箭头</div>
            <div class="opt d-flex align-items-center"><svg class="ic ic-wide on"><use href="#disk"/></svg>保存主题</div>
          </div>
        </div>
        <div class="ttabs d-flex">
          <button class="ttab sel"><svg class="ic"><use href="#grid4"/></svg><span>主题</span></button>
          <button class="ttab"><svg class="ic ic-wide"><use href="#colors"/></svg><span>颜色</span></button>
          <button class="ttab"><svg class="ic ic-wide"><use href="#conn2"/></svg><span>连接线</span></button>
          <button class="ttab"><svg class="ic ic-wide"><use href="#aa"/></svg><span>文本</span></button>
        </div>
        <div class="cards" id="cards"></div>
      </div>
      <div class="track"><div class="thumb long"></div></div>
    </div>
  </aside>
</main>

<footer class="status d-flex align-items-center flex-shrink-0">
  <button aria-label="页面视图" class="on"><svg class="film"><use href="#film"/></svg></button>
  <button class="pagepick d-flex align-items-center justify-content-between"><span>Page-1</span><svg class="caret off"><use href="#caret"/></svg></button>
  <div class="vline"></div>
  <a href="#" class="curpage">Page-1</a>
  <button aria-label="添加页面" class="on"><svg class="ic-sm w2"><use href="#plus"/></svg></button>
  <div class="ms-auto d-flex align-items-center on">
    <button aria-label="播放"><svg class="ic"><use href="#play"/></svg></button>
    <button aria-label="缩小" class="zout"><svg class="ic-sm w3"><use href="#minus"/></svg></button>
    <input type="range" class="zoomer" min="0" max="100" value="13" aria-label="缩放">
    <button aria-label="放大" class="zin"><svg class="ic-sm w3"><use href="#plus"/></svg></button>
    <button class="pct d-flex align-items-center">67%<svg class="caret off"><use href="#caret"/></svg></button>
    <button aria-label="全屏" class="full"><svg class="ic"><use href="#full"/></svg></button>
    <button aria-label="适合宽度"><svg class="ic"><use href="#fit"/></svg></button>
  </div>
</footer>
</div>

<script>
// gallery of quick styles, one border shade each
document.getElementById('styles').innerHTML=['#aaa','#999','#ccc','#888','#c4c4c4','#888','#999','#bbb'].map(c=>`<button class="sty" style="border-color:${c}">Abc</button>`).join('');

// rulers: 20 units take 63.6 px, with a longer tick at every 10
const step=63.6/4;
const ruler=(from,to,origin,draw)=>{for(let i=from;i<=to;i++)draw(i,Math.round(origin+i*step)+.5,i%4===0?20:i%2===0?11:8);};
let h='',ht='',v='',vt='';
ruler(-8,68,140,(i,x,len)=>{h+=`M${x} ${20-len}V20`;if(i%4===0)ht+=`<text x="${x+2}" y="10">${i*5}</text>`;});
ruler(-1,44,28,(i,y,len)=>{v+=`M${len===20?0:21-len} ${y}H21`;if(i%4===0)vt+=`<text transform="translate(12 ${y+2}) rotate(-90)" text-anchor="end">${i*5}</text>`;});
document.getElementById('hrule').innerHTML=`<path d="${h}"/>${ht}`;
document.getElementById('vrule').innerHTML=`<path d="${v}"/>${vt}`;

// palette
document.getElementById('swatches').innerHTML=`ad1121 cc0a32 e94560 f8637f f99cae 2a7d8f 38a7c4 3fc0de 5fd9f0 a3efff f35025 ff7e3a ff961a ffb813 ffc55c 12937f 16b39c 1accb2 65d8c7 82ebdb 9b2b5c c64d8b e366a6 f985c6 f2c3da 5d8a10 76a029 98bd24 b1d04a d2e08f 1f27ab 343fda 6c40f2 8e6bf8 ab91f7 fbc900 fbdc2f f0ea2c faf54a feff80 9b4edd c44fe4 d06afa bd80ff dba0ff 2f7c44 3c9e54 51ab73 65bb85 90d6aa e93529 ff4638 fa6262 ff7876 ff9088 2440a2 2d55cf 336af0 648cff 88aff7 742c00 963700 a83f28 d25d3e e37758 168adb 2a9cf6 42b0ff 39d1ff 66e4ff 7a4d35 955c43 b37050 d4845e f5986c 8a7e74 b1ab99 cdcab9 e5dfcf f4eddb 1a1a1a 303030 444444 595959 7a7a7a bababa cbcbcb dadada e7e7e7 f2f2f2 ffffff`.split(' ').map(c=>`<i style="background:#${c}"></i>`).join('');

// theme thumbnails: fill, outline, outline width, line, line width, arrow half-width
document.getElementById('cards').innerHTML=[
 ['#fff','#333',1,'#222',1,4],['#fff','#2d2d2d',3,'#2d2d2d',3,6],
 ['#488bf7','#488bf7',1,'#4a80dc',1,4],['#f5655e','#f5655e',1,'#444',2,5],
 ['#d0f0f7','#222',2,'#333',1,4],['#fdf0ae','#777',1,'#333',1,4],
 ['#f3f8f7','#35b48c',3,'#444',2,5],['#cce7df','#cce7df',1,'#1fbf9f',2,5]
].map(([f,s,w,l,lw,a])=>`<svg viewBox="0 0 148 119"><path d="M46 49V73M66 91.500H111.500V71" fill="none" stroke="${l}" stroke-width="${lw}"/><path d="M${46-a} ${78-a*1.800}h${2*a}L46 79zM${111.500-a} ${67+a*1.800}h${2*a}L111.500 66z" fill="${l}"/><g fill="${f}" stroke="${s}" stroke-width="${w}"><path d="M42 21.500Q46 19 50 21.500L67 31.500Q71 34 67 36.500L50 46.500Q46 49 42 46.500L25 36.500Q21 34 25 31.500z"/><rect x="26" y="79" width="40" height="25" rx="4"/><path d="M100 42H132Q136 42 134.500 46L127 63Q125 66.500 121 66.500H90Q86 66.500 87.500 62.500L95 45.500Q96.500 42 100 42z"/></g></svg>`).join('');
</script>
</body>
</html>
